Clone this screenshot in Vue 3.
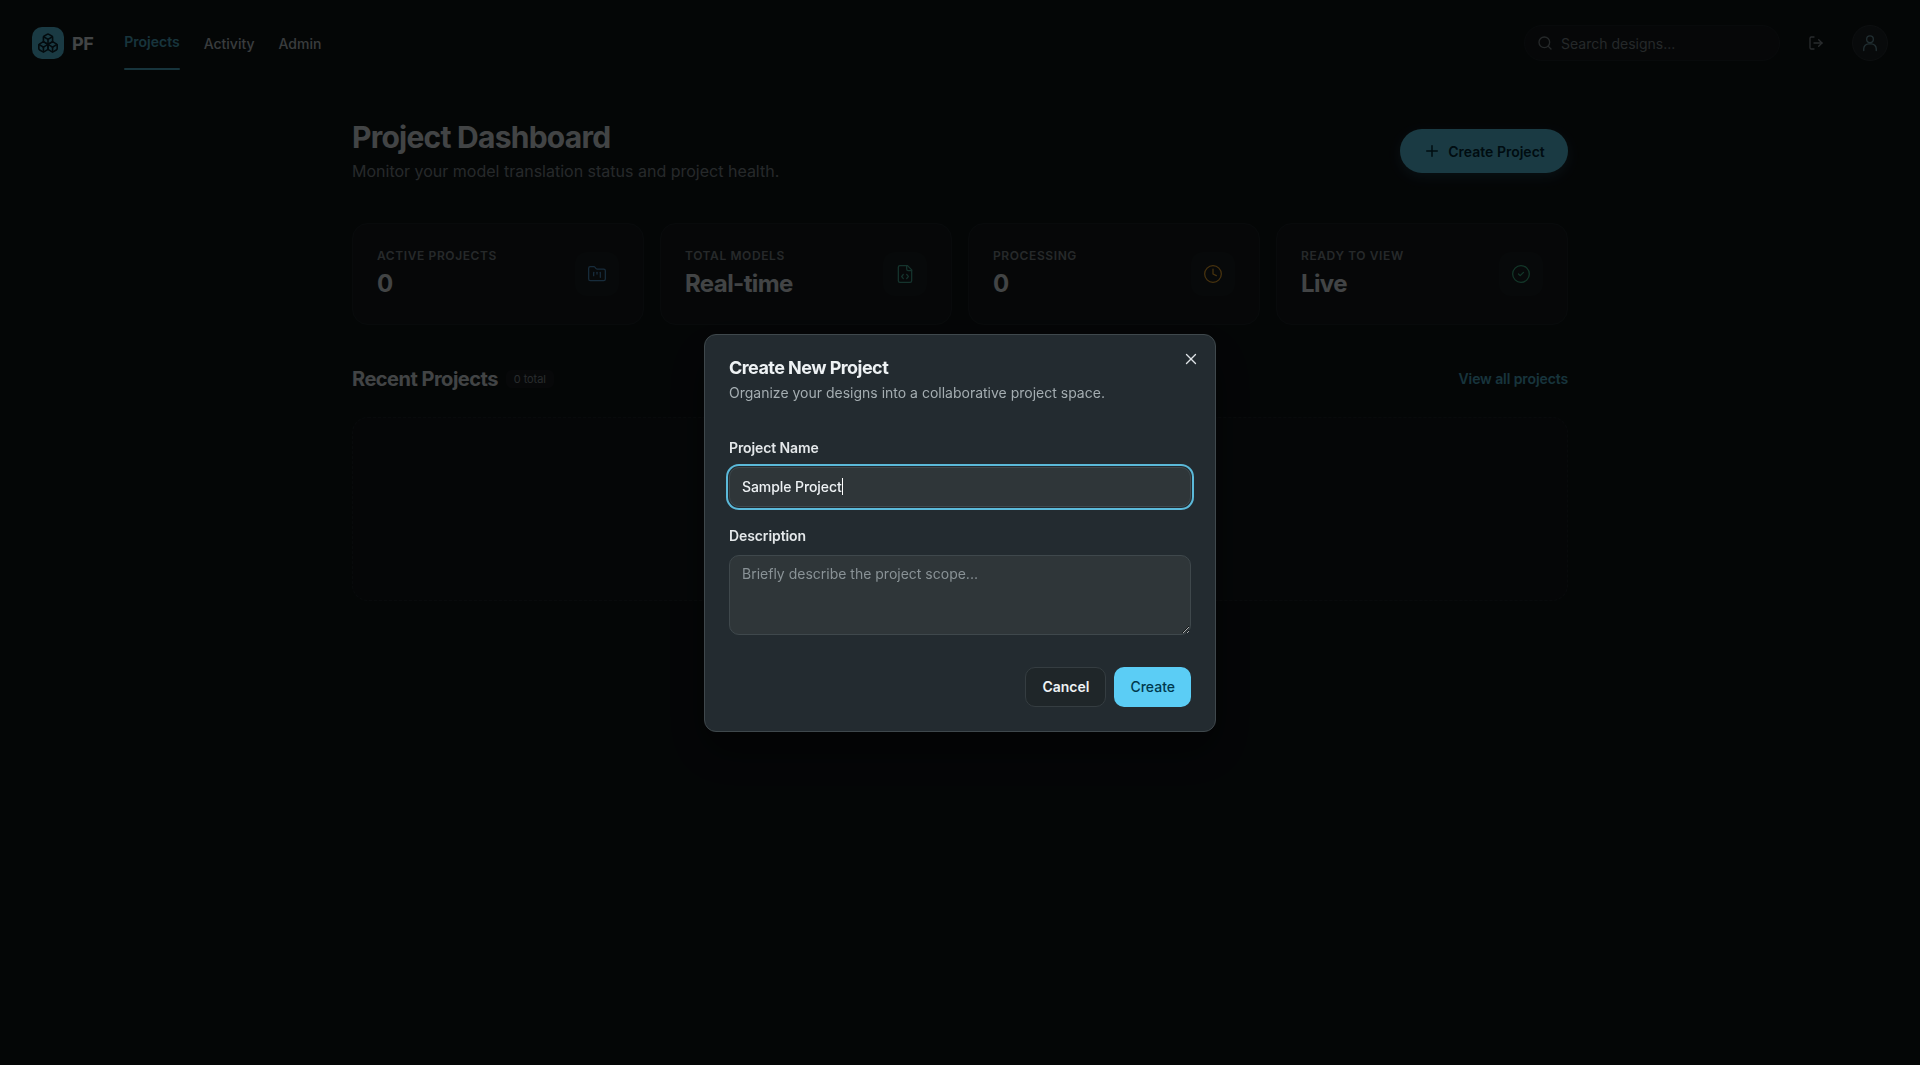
<script setup>
const stats = [
  { label: 'Active Projects', value: '0', icon: 'folder', cls: 'ic-blue' },
  { label: 'Total Models', value: 'Real-time', icon: 'code', cls: 'ic-teal' },
  { label: 'Processing', value: '0', icon: 'clock', cls: 'ic-amber' },
  { label: 'Ready to View', value: 'Live', icon: 'check', cls: 'ic-green' }
]
</script>

<template>
  <div class="page">
    <header class="topbar">
      <div class="left">
        <div class="brand">
          <span class="logo">
            <svg width="22" height="22" viewBox="0 0 24 24" fill="none" stroke="currentColor" stroke-width="1.8" stroke-linecap="round" stroke-linejoin="round">
              <path d="M2.970 12.920A2 2 0 0 0 2 14.630v3.240a2 2 0 0 0 .97 1.710l3 1.800a2 2 0 0 0 2.060 0L12 19v-5.500l-5-3-4.030 2.420Z" />
              <path d="m7 16.500-4.740-2.850" /><path d="m7 16.500 5-3" /><path d="M7 16.500v5.170" />
              <path d="M12 13.500V19l3.970 2.380a2 2 0 0 0 2.060 0l3-1.800a2 2 0 0 0 .97-1.710v-3.240a2 2 0 0 0-.97-1.710L17 10.500l-5 3Z" />
              <path d="m17 16.500-5-3" /><path d="m17 16.500 4.740-2.850" /><path d="M17 16.500v5.170" />
              <path d="M7.970 4.420A2 2 0 0 0 7 6.130v4.370l5 3 5-3V6.130a2 2 0 0 0-.97-1.710l-3-1.800a2 2 0 0 0-2.060 0l-3 1.800Z" />
              <path d="M12 8 7.260 5.150" /><path d="m12 8 4.740-2.850" /><path d="M12 13.500V8" />
            </svg>
          </span>
          <span class="brand-name">PF</span>
        </div>
        <nav class="nav">
          <a class="nav-item active">Projects</a>
          <a class="nav-item">Activity</a>
          <a class="nav-item">Admin</a>
        </nav>
      </div>
      <div class="right">
        <div class="search">
          <svg width="16" height="16" viewBox="0 0 24 24" fill="none" stroke="currentColor" stroke-width="2" stroke-linecap="round" stroke-linejoin="round"><circle cx="11" cy="11" r="8" /><path d="m21 21-4.300-4.300" /></svg>
          <span>Search designs...</span>
        </div>
        <span class="logout">
          <svg width="16" height="16" viewBox="0 0 24 24" fill="none" stroke="currentColor" stroke-width="2" stroke-linecap="round" stroke-linejoin="round"><path d="M9 21H5a2 2 0 0 1-2-2V5a2 2 0 0 1 2-2h4" /><path d="m16 17 5-5-5-5" /><path d="M21 12H9" /></svg>
        </span>
        <span class="avatar">
          <svg width="20" height="20" viewBox="0 0 24 24" fill="none" stroke="currentColor" stroke-width="1.600" stroke-linecap="round"><circle cx="12" cy="7.500" r="4" /><path d="M4.500 21v-2a6 6 0 0 1 6-6h3a6 6 0 0 1 6 6v2" /></svg>
        </span>
      </div>
    </header>

    <main class="main">
      <section class="head">
        <div>
          <h1>Project Dashboard</h1>
          <p>Monitor your model translation status and project health.</p>
        </div>
        <button class="primary-btn">
          <svg width="18" height="18" viewBox="0 0 24 24" fill="none" stroke="currentColor" stroke-width="2" stroke-linecap="round"><path d="M5 12h14" /><path d="M12 5v14" /></svg>
          Create Project
        </button>
      </section>

      <section class="stats">
        <div v-for="s in stats" :key="s.label" class="card">
          <div>
            <div class="card-label">{{ s.label }}</div>
            <div class="card-value">{{ s.value }}</div>
          </div>
          <span class="card-icon" :class="s.cls">
            <svg width="20" height="20" viewBox="0 0 24 24" fill="none" stroke="currentColor" stroke-width="1.500" stroke-linecap="round" stroke-linejoin="round">
              <template v-if="s.icon === 'folder'">
                <path d="M20 20a2 2 0 0 0 2-2V8a2 2 0 0 0-2-2h-7.900a2 2 0 0 1-1.690-.900L9.600 3.900A2 2 0 0 0 7.930 3H4a2 2 0 0 0-2 2v13a2 2 0 0 0 2 2Z" />
                <path d="M8 10v4" /><path d="M12 10v2" /><path d="M16 10v6" />
              </template>
              <template v-else-if="s.icon === 'code'">
                <path d="M10 12.500 8 15l2 2.500" /><path d="m14 12.500 2 2.500-2 2.500" /><path d="M14 2v4a2 2 0 0 0 2 2h4" />
                <path d="M15 2H6a2 2 0 0 0-2 2v16a2 2 0 0 0 2 2h12a2 2 0 0 0 2-2V7z" />
              </template>
              <template v-else-if="s.icon === 'clock'">
                <circle cx="12" cy="12" r="10" /><path d="M12 6v6l4 2" />
              </template>
              <template v-else>
                <circle cx="12" cy="12" r="10" /><path d="m9 12 2 2 4-4" />
              </template>
            </svg>
          </span>
        </div>
      </section>

      <section class="recent-head">
        <div class="recent-title">
          <h2>Recent Projects</h2>
          <span class="chip">0 total</span>
        </div>
        <a class="view-all">View all projects</a>
      </section>
      <div class="empty-panel"></div>
    </main>

    <div class="overlay">
      <div class="modal">
        <button class="close">
          <svg width="18" height="18" viewBox="0 0 24 24" fill="none" stroke="currentColor" stroke-width="1.800" stroke-linecap="round"><path d="M18 6 6 18" /><path d="m6 6 12 12" /></svg>
        </button>
        <h3>Create New Project</h3>
        <p class="modal-sub">Organize your designs into a collaborative project space.</p>
        <label class="field-label first">Project Name</label>
        <div class="input focus"><span>Sample Project</span><i class="caret"></i></div>
        <label class="field-label second">Description</label>
        <textarea class="textarea" placeholder="Briefly describe the project scope..."></textarea>
        <div class="actions">
          <button class="btn cancel">Cancel</button>
          <button class="btn create">Create</button>
        </div>
      </div>
    </div>
  </div>
</template>

<style>
html, body { margin: 0; background: #0f1417; }
</style>

<style scoped>
* { box-sizing: border-box; }
.page {
  min-height: 1065px;
  background: #0f1417;
  font-family: Inter, "Noto Sans", sans-serif;
  color: #dee3e6;
}
.topbar {
  height: 86px;
  padding: 0 32px;
  display: flex;
  align-items: center;
  justify-content: space-between;
}
.left, .right, .brand { display: flex; align-items: center; }
.brand { gap: 8px; margin-right: 31px; }
.logo {
  width: 32px; height: 32px; border-radius: 10px;
  background: #58c4e0; color: #0b2530;
  display: flex; align-items: center; justify-content: center;
}
.brand-name { font-size: 18px; font-weight: 700; letter-spacing: -0.5px; }
.nav { display: flex; gap: 24px; align-self: stretch; height: 86px; }
.nav-item {
  font-size: 14px; font-weight: 500; color: #bfc8cc;
  display: flex; align-items: center; height: 86px;
}
.nav-item.active {
  color: #4fb0c8; font-weight: 600; position: relative; padding-bottom: 3px;
}
.nav-item.active::after {
  content: ""; position: absolute; left: 0; right: 0; top: 68px; height: 2px;
  background: #4fb0c8; border-radius: 2px;
}
.search {
  width: 256px; height: 36px; border-radius: 18px;
  background: #15191c; border: 1px solid #1c2326;
  display: flex; align-items: center; gap: 8px; padding: 0 12px;
  color: #7d878b; font-size: 14px;
}
.logout { margin: 0 28px; color: #899296; display: flex; }
.avatar {
  width: 36px; height: 36px; border-radius: 50%;
  background: #1b2225; border: 1px solid #2a3235; color: #6f9aa6;
  display: flex; align-items: center; justify-content: center;
}
.main { width: 1216px; margin: 0 auto; padding-top: 31px; }
.head { display: flex; justify-content: space-between; align-items: center; height: 68px; margin-bottom: 38px; }
h1 { margin: 0; font-size: 30px; line-height: 36px; font-weight: 700; letter-spacing: -0.75px; }
.head p { margin: 4px 0 0; font-size: 16px; line-height: 24px; color: #808a8e; }
.primary-btn {
  width: 168px; height: 44px; border: 0; border-radius: 22px;
  background: #58c4e0; color: #002b3a;
  font: 600 14px Inter, sans-serif;
  display: flex; align-items: center; justify-content: center; gap: 7px;
  box-shadow: 0 4px 12px rgba(91, 205, 245, .2);
}
.stats { display: grid; grid-template-columns: repeat(4, 1fr); gap: 16px; }
.card {
  height: 102px; padding: 24px;
  background: #14191c; border: 1px solid #1d2427; border-radius: 16px;
  display: flex; justify-content: space-between; align-items: center;
}
.card-label { font-size: 12px; line-height: 16px; font-weight: 600; letter-spacing: .6px; text-transform: uppercase; color: #808a8e; }
.card-value { font-size: 24px; line-height: 32px; font-weight: 700; letter-spacing: -.6px; color: #dee3e6; margin-top: 4px; }
.card-icon {
  width: 44px; height: 44px; border-radius: 12px; background: #191f22;
  display: flex; align-items: center; justify-content: center;
}
.ic-blue { color: #4f94c8; }
.ic-teal { color: #47ad98; }
.ic-amber { color: #f0aa30; }
.ic-green { color: #3fb88a; }
.recent-head { display: flex; justify-content: space-between; align-items: center; margin-top: 40px; height: 28px; }
.recent-title { display: flex; align-items: center; gap: 8px; }
h2 { margin: 0; font-size: 20px; line-height: 28px; font-weight: 700; letter-spacing: -.5px; }
.chip { font-size: 11px; letter-spacing: -.1px; padding: 2px 8px; border-radius: 6px; background: #181d20; color: #899296; }
.view-all { font-size: 14px; font-weight: 600; letter-spacing: -.1px; color: #4fb0c8; padding-bottom: 1px; }
.empty-panel {
  margin-top: 24px; height: 184px; border-radius: 16px;
  background: #12171a; border: 1px dashed #1d2427;
}
.overlay {
  position: fixed; inset: 0;
  background: rgba(0, 0, 0, .7);
  display: flex; align-items: center; justify-content: center;
}
.modal {
  position: relative;
  width: 512px; height: 398px;
  padding: 19px 24px 24px;
  background: #232b30; border: 1px solid #3f484c; border-radius: 12px;
  box-shadow: 0 20px 40px rgba(0, 0, 0, .4);
  display: flex; flex-direction: column;
}
.close {
  position: absolute; top: 15px; right: 15px; width: 18px; height: 18px;
  padding: 0; border: 0; background: none; color: #dee3e6; display: flex;
}
h3 { margin: 0; font-size: 18px; line-height: 28px; font-weight: 700; letter-spacing: -.55px; color: #eef2f4; }
.modal-sub { margin: 1px 0 0; font-size: 14px; line-height: 20px; color: #a4adb1; }
.field-label { display: block; font-size: 14px; line-height: 20px; font-weight: 600; letter-spacing: -.1px; color: #e4e8ea; }
.field-label.first { margin-top: 35px; }
.field-label.second { margin-top: 19px; }
.input {
  margin-top: 9px; height: 40px; padding: 0 12px;
  border: 1px solid #3f484c; border-radius: 10px; background: #2f3639;
  display: flex; align-items: center; font-size: 14px; font-weight: 500; letter-spacing: -.08px; color: #eef2f4;
}
.input.focus { box-shadow: 0 0 0 1px #232b30, 0 0 0 3px #5bb9d9; }
.caret { width: 1px; height: 17px; background: #fff; display: block; }
.textarea {
  margin-top: 9px; height: 80px; padding: 8px 12px;
  border: 1px solid #3f484c; border-radius: 10px; background: #2f3639;
  font: 14px/20px Inter, sans-serif; color: #eef2f4; outline: 0; display: block; width: 100%;
}
.textarea::placeholder { color: #899296; opacity: 1; }
.actions { display: flex; justify-content: flex-end; gap: 8px; margin-top: 32px; }
.btn { height: 40px; border-radius: 10px; font: 600 14px Inter, sans-serif; padding: 0 16px; }
.cancel { background: #1f2629; border: 1px solid #353d41; color: #eef2f4; }
.create { background: #5bcdf5; border: 0; color: #00394d; font-weight: 500; }
</style>
